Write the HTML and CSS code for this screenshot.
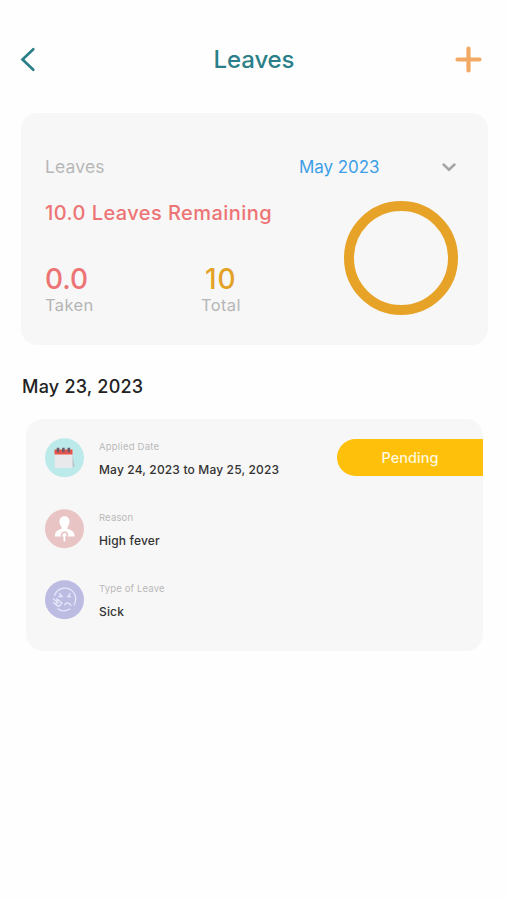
FILE: index.html
```html
<!DOCTYPE html>
<html lang="en">
<head>
<meta charset="utf-8">
<title>Leaves</title>
<link rel="stylesheet" href="styles.css">
</head>
<body>
<header class="bar">
  <svg class="back" width="18" height="26" viewBox="0 0 18 26"><path d="M15.300 2.200 4.500 12.500 15.300 22.800"/></svg>
  <h1>Leaves</h1>
  <svg class="add" width="28" height="28" viewBox="0 0 28 28"><path d="M14.500 2.500v22M3.500 13.500h22"/></svg>
</header>
<main>
  <section class="summary">
    <div class="filter">
      <span class="label">Leaves</span>
      <span class="month">May 2023</span>
      <svg class="chevron" width="16" height="12" viewBox="0 0 16 12"><path d="M2.500 3.500 8 8.700 13.500 3.500"/></svg>
    </div>
    <div class="details">
      <div class="figures">
        <p class="remaining">10.0 Leaves Remaining</p>
        <div class="counts">
          <div class="count taken"><strong>0.0</strong><span>Taken</span></div>
          <div class="count total"><strong>10</strong><span>Total</span></div>
        </div>
      </div>
      <div class="ring"></div>
    </div>
  </section>
  <h2>May 23, 2023</h2>
  <section class="request">
    <div class="row">
      <svg class="icon" width="40" height="40" viewBox="0 0 40 40">
        <circle cx="19.500" cy="19.700" r="19.500" fill="#bce9ea"/>
        <path d="m27 15 2.600 13.500-3 1z" fill="#b4c3ca"/>
        <path d="M9.800 12h17.700v18H9.800z" fill="#e9e9ec"/>
        <path d="M9.500 11.500h18v5h-18z" fill="#e6534a"/>
        <path d="M13 9.700v4.500M18.400 9.700v4.500M23.800 9.700v4.500" stroke="#6a5968" stroke-width="2.500"/>
      </svg>
      <div class="text"><span class="name applied">Applied Date</span><span class="value">May 24, 2023 to May 25, 2023</span></div>
      <div class="badge">Pending</div>
    </div>
    <div class="row">
      <svg class="icon" width="40" height="40" viewBox="0 0 40 40">
        <circle cx="19.500" cy="19.700" r="19.500" fill="#e9c4c5"/>
        <path d="M14.500 12.500c0-7 10-7 10 0 0 2.500-.7 4-2 5.200V20c3.500 1 6.800 1.500 7.200 7.500H9.800c.4-6 3.200-6.500 6.700-7.500v-2.300c-1.300-1.200-2-2.700-2-5.200z" fill="#fff"/>
        <path d="M16.500 28v-1.500c0-4.500 6.300-4 5.900-.7-.2 2-2.200 2-2.600 4.200" fill="none" stroke="#e9c4c5" stroke-width="1.700"/>
        <path d="M19.400 25.500v7" stroke="#fff" stroke-width="1.800"/>
      </svg>
      <div class="text"><span class="name">Reason</span><span class="value">High fever</span></div>
    </div>
    <div class="row">
      <svg class="icon" width="40" height="40" viewBox="0 0 40 40">
        <circle cx="19.500" cy="19.700" r="19.500" fill="#bcbce3"/>
        <g fill="none" stroke="#e6e6fa" stroke-width="1.300" stroke-linecap="round">
          <path d="M9.500 15.500C12.500 7 24 5.500 29 13c3 5 2 8.500 0 12M25 29c-4 2.500-9 2.500-12 0"/>
          <path d="m14.500 13.500 2.500 3h-3M25 13.500l-2 3h2.500M19.500 25c2-3.500 5-2 6.500.5"/>
          <path d="m8.500 19 5 4M8.500 22.500l4 3.500M12 19l5 4-3 3.500-3-2z"/>
        </g>
      </svg>
      <div class="text"><span class="name">Type of Leave</span><span class="value">Sick</span></div>
    </div>
  </section>
</main>
</body>
</html>
```
FILE: styles.css
```css
* { box-sizing: border-box; }
body {
  margin: 0;
  min-height: 900px;
  background: #fefefe;
  font-family: Inter, "Liberation Sans", sans-serif;
}
h1, h2, p { margin: 0; }
svg { display: block; flex: none; }
.bar {
  display: grid;
  grid-template-columns: 60px 1fr 60px;
  align-items: center;
  height: 60px;
  margin-top: 30px;
  padding: 0 25px 0 18px;
}
.bar h1 {
  justify-self: center;
  margin-left: 8px;
  color: #2b7f88;
  font-size: 24px;
  font-weight: 450;
  line-height: 30px;
  letter-spacing: -.1px;
}
.back path, .add path, .chevron path { fill: none; stroke-linecap: round; }
.back path { stroke: #2b7f88; stroke-width: 2.700; }
.add { justify-self: end; }
.add path { stroke: #f2a964; stroke-width: 4.200; }
.summary {
  height: 232px;
  margin: 23px 19px 0 21px;
  padding: 42px 29px 0 24px;
  border-radius: 16px;
  background: #f7f7f7;
}
.filter { display: flex; align-items: center; height: 24px; }
.label {
  width: 254px;
  margin-top: -2px;
  color: #b7b7b7;
  font-size: 17.500px;
  letter-spacing: .15px;
}
.month { color: #3d9fe8; font-size: 17px; letter-spacing: -.05px; white-space: nowrap; }
.chevron { margin-left: auto; margin-right: 2px; }
.chevron path { stroke: #a5a5a5; stroke-width: 2.500; }
.details { display: flex; justify-content: space-between; }
.figures { padding-top: 21px; }
.remaining {
  color: #ed7474;
  font-size: 20px;
  font-weight: 450;
  line-height: 26px;
  letter-spacing: .44px;
  white-space: nowrap;
}
.counts { display: grid; grid-template-columns: 156px auto; justify-content: start; margin-top: 37px; }
.count { display: flex; flex-direction: column; justify-self: start; }
.count strong { font-size: 28px; font-weight: 450; line-height: 32px; }
.count span { color: #b5b5b5; font-size: 16.500px; line-height: 20px; letter-spacing: .35px; }
.taken strong { color: #ed7474; }
.total strong { color: #e3a226; padding-left: 4px; letter-spacing: .8px; }
.ring {
  width: 114px;
  height: 114px;
  margin-top: 22px;
  margin-right: 1px;
  border: 10px solid #e7a328;
  border-radius: 50%;
}
h2 {
  margin: 30px 0 0 22px;
  color: #222;
  font-size: 18px;
  font-weight: 450;
  line-height: 24px;
  letter-spacing: .22px;
}
.request {
  height: 232px;
  margin: 20px 24px 0 26px;
  padding: 19px 0 0 19px;
  border-radius: 17px;
  background: #f7f7f7;
}
.row { display: flex; align-items: center; height: 40px; margin-bottom: 31px; }
.text { display: flex; flex-direction: column; margin-left: 14px; }
.name { color: #b9b9b9; font-size: 9.500px; line-height: 16px; letter-spacing: .15px; }
.applied { letter-spacing: .22px; }
.value { margin-top: 7px; color: #333; font-size: 12px; font-weight: 500; line-height: 16px; letter-spacing: .16px; white-space: nowrap; }
.badge {
  width: 146px;
  height: 37px;
  margin: -2px 0 0 auto;
  border-radius: 19px 0 0 19px;
  background: #ffc00b;
  color: #fff8df;
  font-size: 14.500px;
  font-weight: 500;
  line-height: 37px;
  text-align: center;
}
```
